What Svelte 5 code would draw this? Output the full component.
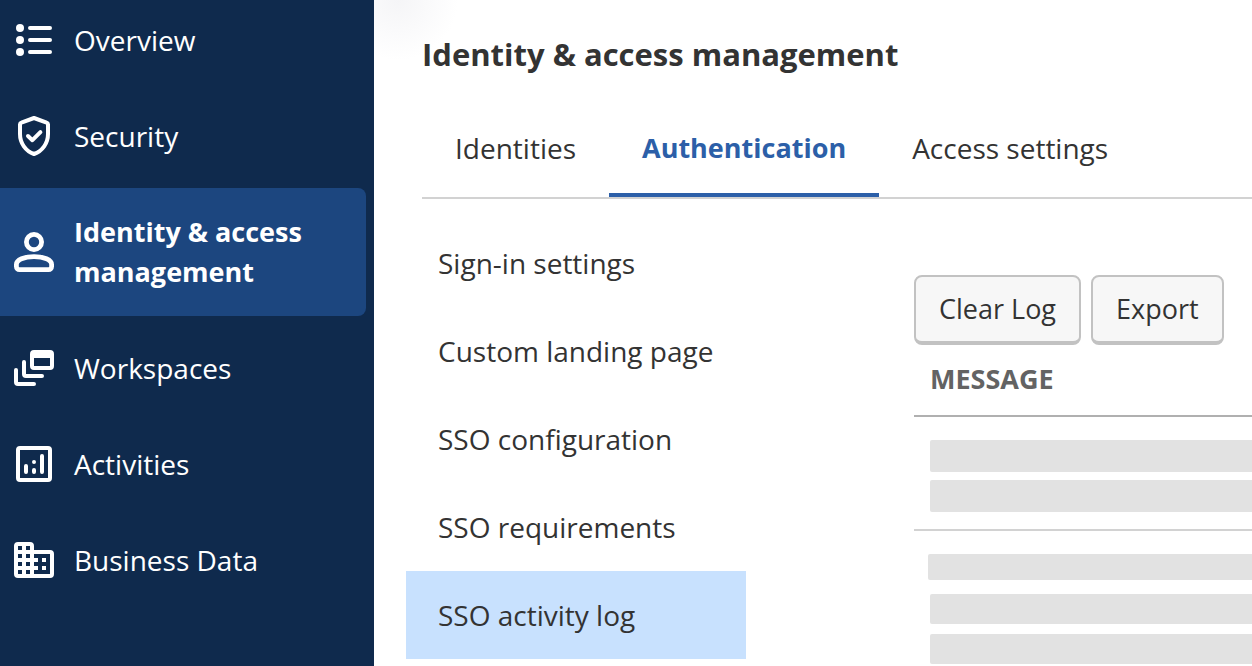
<script lang="ts">
	const sections = [
		{ label: 'Overview', icon: 'list' },
		{ label: 'Security', icon: 'shield' },
		{ label: 'Identity & access management', icon: 'person' },
		{ label: 'Workspaces', icon: 'stack' },
		{ label: 'Activities', icon: 'chart' },
		{ label: 'Business Data', icon: 'building' }
	]
	const tabs = ['Identities', 'Authentication', 'Access settings']
	const pages = ['Sign-in settings', 'Custom landing page', 'SSO configuration', 'SSO requirements', 'SSO activity log']

	let section = $state('Identity & access management')
	let tab = $state('Authentication')
	let page = $state('SSO activity log')
</script>

<div class="layout">
	<nav class="sidebar" aria-label="Administration">
		{#each sections as { label, icon }}
			<a href="#{icon}" class:active={section === label} onclick={() => (section = label)}>
				<svg viewBox="0 0 24 24" aria-hidden="true">
					{#if icon === 'list'}
						<circle cx="5" cy="6" r="2" />
						<circle cx="5" cy="12" r="2" />
						<circle cx="5" cy="18" r="2" />
						<path class="line" d="M10 6h10M10 12h10M10 18h10" />
					{:else if icon === 'shield'}
						<path class="line" d="M12 3l6.3 2.3a1 1 0 0 1 .7.9V11c0 4.6-2.8 8.5-7 10-4.2-1.5-7-5.4-7-10V6.2a1 1 0 0 1 .7-.9z" />
						<path class="line" d="M9 12l2.2 2.1 4-4" />
					{:else if icon === 'person'}
						<circle class="line thick" cx="12" cy="7" r="3.8" />
						<path class="line thick" d="M3.2 18.2c0-2.3 3.9-3.9 8.8-3.9s8.8 1.6 8.8 3.9v1.1a1.5 1.5 0 0 1-1.5 1.5H4.7a1.5 1.5 0 0 1-1.5-1.5z" />
					{:else if icon === 'stack'}
						<path fill-rule="evenodd" d="M12 3h8a2 2 0 0 1 2 2v6a2 2 0 0 1-2 2h-8a2 2 0 0 1-2-2V5a2 2 0 0 1 2-2zm0 4v4h8V7z" />
						<path class="line" d="M7 9v6a1 1 0 0 0 1 1h8M3 13v6a1 1 0 0 0 1 1h8" />
					{:else if icon === 'chart'}
						<rect class="line" x="4" y="4" width="16" height="16" rx="1" />
						<path class="line" d="M8 13v3M12 11h0M12 15v1M16 8v8" />
					{:else}
						<path
							fill-rule="evenodd"
							d="M4 3h6a2 2 0 0 1 2 2v2h8a2 2 0 0 1 2 2v10a2 2 0 0 1-2 2H4a2 2 0 0 1-2-2V5a2 2 0 0 1 2-2zM4 5v2h2V5zm4 0v2h2V5zM4 9v2h2V9zm4 0v2h2V9zm-4 4v2h2v-2zm4 0v2h2v-2zm-4 4v2h2v-2zm4 0v2h2v-2zM12 9v2h2v2h-2v2h2v2h-2v2h8V9zm4 2h2v2h-2zm0 4h2v2h-2z"
						/>
					{/if}
				</svg>
				<span>{label}</span>
			</a>
		{/each}
	</nav>

	<main>
		<h1>Identity & access management</h1>

		<div class="tabs" role="tablist">
			{#each tabs as name}
				<button role="tab" aria-selected={tab === name} class:active={tab === name} onclick={() => (tab = name)}>{name}</button>
			{/each}
		</div>

		<div class="content">
			<nav class="pages" aria-label="Authentication">
				{#each pages as name}
					<a href="#{name.toLowerCase().replaceAll(' ', '-')}" class:active={page === name} onclick={() => (page = name)}>{name}</a>
				{/each}
			</nav>

			<section class="log">
				<div class="actions">
					<button>Clear Log</button>
					<button>Export</button>
				</div>

				<table>
					<thead>
						<tr><th>MESSAGE</th></tr>
					</thead>
					<tbody>
						<tr>
							<td>
								<div class="bar"></div>
								<div class="bar"></div>
							</td>
						</tr>
						<tr>
							<td class="compact">
								<div class="bar wide"></div>
								<div class="bar"></div>
								<div class="bar"></div>
							</td>
						</tr>
					</tbody>
				</table>
			</section>
		</div>
	</main>
</div>

<style>
	:global(body) {
		margin: 0;
		background: #fff;
	}

	.layout {
		display: flex;
		height: 100vh;
		overflow: hidden;
		font-family: 'Open Sans', 'Noto Sans', sans-serif;
		font-size: 28px;
		line-height: 40px;
		color: #333;
	}

	a {
		color: inherit;
		text-decoration: none;
	}

	button {
		font: inherit;
		color: inherit;
		white-space: nowrap;
		cursor: pointer;
	}

	.sidebar {
		flex: none;
		width: 374px;
		box-sizing: border-box;
		padding-right: 8px;
		display: flex;
		flex-direction: column;
		gap: 8px;
		background: #0f2a4d;
		color: #fff;
	}

	.sidebar a {
		display: flex;
		align-items: center;
		gap: 16px;
		padding: 24px 16px 24px 10px;
		border-radius: 0 8px 8px 0;
	}

	.sidebar a:first-child {
		padding-top: 20px;
	}

	.sidebar a.active {
		background: #1c467f;
		font-size: 27px;
		font-weight: 700;
	}

	svg {
		flex: none;
		width: 48px;
		height: 48px;
		margin-block: -4px;
		fill: #fff;
	}

	.line {
		fill: none;
		stroke: #fff;
		stroke-width: 2;
		stroke-linecap: round;
		stroke-linejoin: round;
	}

	.thick {
		stroke-width: 2.4;
	}

	main {
		flex: 1;
		min-width: 0;
		background: radial-gradient(ellipse 60px 60px at 24px 0, #f5f5f7, #fff);
	}

	h1 {
		margin: 0;
		padding: 32px 0 0 48px;
		font-size: 31px;
		line-height: 44px;
		font-weight: 700;
	}

	.tabs {
		display: flex;
		margin-left: 48px;
		padding-top: 24px;
		border-bottom: 2px solid #d2d2d2;
	}

	.tabs button {
		padding: 28px 33px 25px;
		border: 0;
		border-bottom: 4px solid transparent;
		background: none;
	}

	.tabs button.active {
		border-color: #2c5fa8;
		color: #2c5fa8;
		font-size: 27px;
		font-weight: 700;
	}

	.content {
		display: flex;
		gap: 168px;
		padding-left: 32px;
	}

	.pages {
		flex: none;
		width: 340px;
		padding-top: 20px;
	}

	.pages a {
		display: block;
		padding: 24px 32px;
	}

	.pages a.active {
		background: #c8e1fe;
	}

	.log {
		flex: 1;
		min-width: 0;
		padding-top: 76px;
	}

	.actions {
		display: flex;
		gap: 10px;
	}

	.actions button {
		padding: 12px 23px;
		border: 2px solid #c2c2c2;
		border-bottom-width: 4px;
		border-radius: 8px;
		background: #f7f7f7;
		font-size: 27px;
	}

	table {
		width: 100%;
		border-spacing: 0;
	}

	th {
		padding: 14px 16px 16px;
		border-bottom: 2px solid #b0b0b0;
		color: #636363;
		font-size: 27px;
		font-weight: 700;
		text-align: left;
	}

	td {
		padding: 23px 0 17px 16px;
		border-bottom: 2px solid #d2d2d2;
	}

	.bar {
		height: 32px;
		border-radius: 2px 0 0 2px;
		background: #e2e2e2;
	}

	.bar + .bar {
		margin-top: 8px;
	}

	.compact .bar {
		height: 30px;
	}

	.compact .bar + .bar {
		margin-top: 10px;
	}

	.compact .bar.wide {
		height: 26px;
		margin: 0 0 14px -2px;
	}
</style>
